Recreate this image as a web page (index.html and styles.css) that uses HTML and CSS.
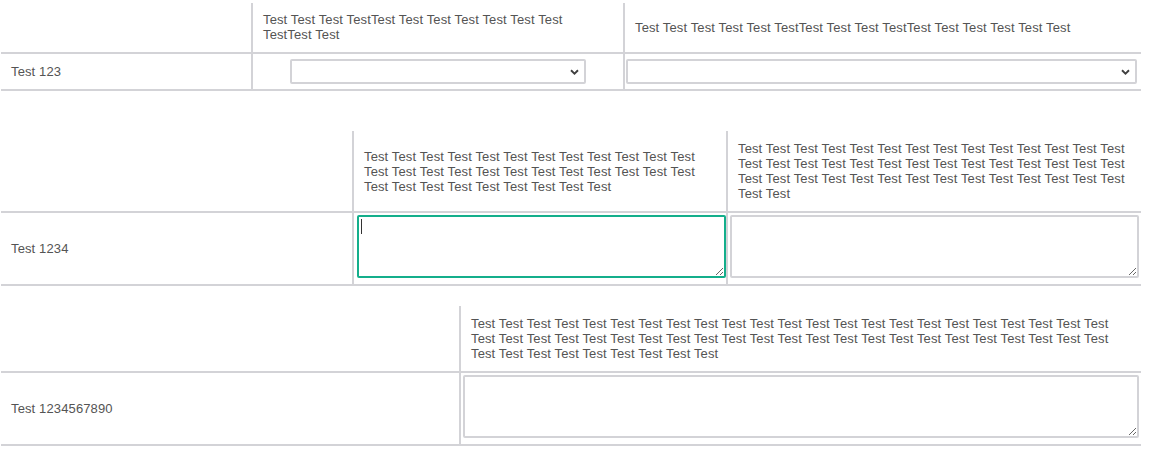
FILE: index.html
```html
<!DOCTYPE html>
<html lang="en">
<head>
<meta charset="utf-8">
<title>Form grid</title>
<link rel="stylesheet" href="styles.css">
</head>
<body>
  <div class="form-grid grid-a">
    <div class="cell head"></div>
    <div class="cell head sep">Test Test Test TestTest Test Test Test Test Test Test TestTest Test</div>
    <div class="cell head sep">Test Test Test Test Test TestTest Test Test TestTest Test Test Test Test Test</div>
    <div class="cell label">Test 123</div>
    <div class="cell sep centered"><select class="sel sel-narrow"><option></option></select></div>
    <div class="cell sep"><select class="sel sel-wide"><option></option></select></div>
  </div>

  <div class="form-grid grid-b">
    <div class="cell head"></div>
    <div class="cell head sep">Test Test Test Test Test Test Test Test Test Test Test Test Test Test Test Test Test Test Test Test Test Test Test Test Test Test Test Test Test Test Test Test Test</div>
    <div class="cell head sep">Test Test Test Test Test Test Test Test Test Test Test Test Test Test Test Test Test Test Test Test Test Test Test Test Test Test Test Test Test Test Test Test Test Test Test Test Test Test Test Test Test Test Test Test</div>
    <div class="cell label">Test 1234</div>
    <div class="cell sep">
      <div class="area-wrap is-focused">
        <textarea class="area"></textarea>
        <span class="caret"></span>
      </div>
    </div>
    <div class="cell sep"><div class="area-wrap"><textarea class="area"></textarea></div></div>
  </div>

  <div class="form-grid grid-c">
    <div class="cell head"></div>
    <div class="cell head sep">Test Test Test Test Test Test Test Test Test Test Test Test Test Test Test Test Test Test Test Test Test Test Test Test Test Test Test Test Test Test Test Test Test Test Test Test Test Test Test Test Test Test Test Test Test Test Test Test Test Test Test Test Test Test Test</div>
    <div class="cell label">Test 1234567890</div>
    <div class="cell sep"><div class="area-wrap"><textarea class="area"></textarea></div></div>
  </div>
</body>
</html>
```

FILE: styles.css
```css
* {
  box-sizing: border-box;
}

body {
  margin: 0;
  background: #ffffff;
  font-family: "Liberation Sans", Arial, sans-serif;
  font-size: 13px;
  line-height: 15px;
  letter-spacing: 0.13px;
  color: #545454;
}

.form-grid {
  display: grid;
  width: 1140px;
  margin-left: 1px;
}

.grid-a {
  grid-template-columns: 250px 372px 518px;
  margin-top: 3px;
}

.grid-b {
  grid-template-columns: 351px 374px 415px;
  margin-top: 40px;
}

.grid-c {
  grid-template-columns: 458px 682px;
  margin-top: 20px;
}

.cell {
  border-bottom: 2px solid #d3d3d7;
  display: flex;
  align-items: center;
  min-width: 0;
}

.sep {
  border-left: 2px solid #d3d3d7;
}

.head {
  padding: 10px 10px;
}

.grid-a .head {
  padding: 9px 10px 10px;
}

.label {
  padding: 0 10px;
}

.centered {
  justify-content: center;
}

.sel {
  -webkit-appearance: none;
  appearance: none;
  display: block;
  height: 25px;
  margin: 5px 0;
  border: 2px solid #d3d3d7;
  border-radius: 2px;
  background-color: #ffffff;
  background-image: url("data:image/svg+xml,%3Csvg xmlns='http://www.w3.org/2000/svg' width='9' height='6' viewBox='0 0 9 6'%3E%3Cpath d='M1 1.2 L4.5 4.6 L8 1.2' fill='none' stroke='%23404040' stroke-width='1.9'/%3E%3C/svg%3E");
  background-repeat: no-repeat;
  background-position: right 5px center;
  font: inherit;
  color: #545454;
  padding: 0 20px 0 4px;
}

.sel-narrow {
  width: 80%;
}

.sel-wide {
  width: 99%;
  margin-left: 1px;
}

.area-wrap {
  position: relative;
  width: calc(100% - 4px);
  height: 63px;
  margin: 2px 2px 6px 2px;
}

.area {
  display: block;
  width: 100%;
  height: 100%;
  margin: 0;
  padding: 2px;
  border: 2px solid #d3d3d7;
  border-radius: 2px;
  font: inherit;
  color: #333333;
  background: #ffffff;
  resize: both;
  outline: none;
}

.area-wrap.is-focused {
  margin-left: 3px;
  margin-right: 0;
  width: calc(100% - 3px);
}

.area-wrap.is-focused .area {
  border-color: #14ae8b;
}

.caret {
  position: absolute;
  left: 4px;
  top: 4px;
  width: 1px;
  height: 15px;
  background: #333333;
}
```
